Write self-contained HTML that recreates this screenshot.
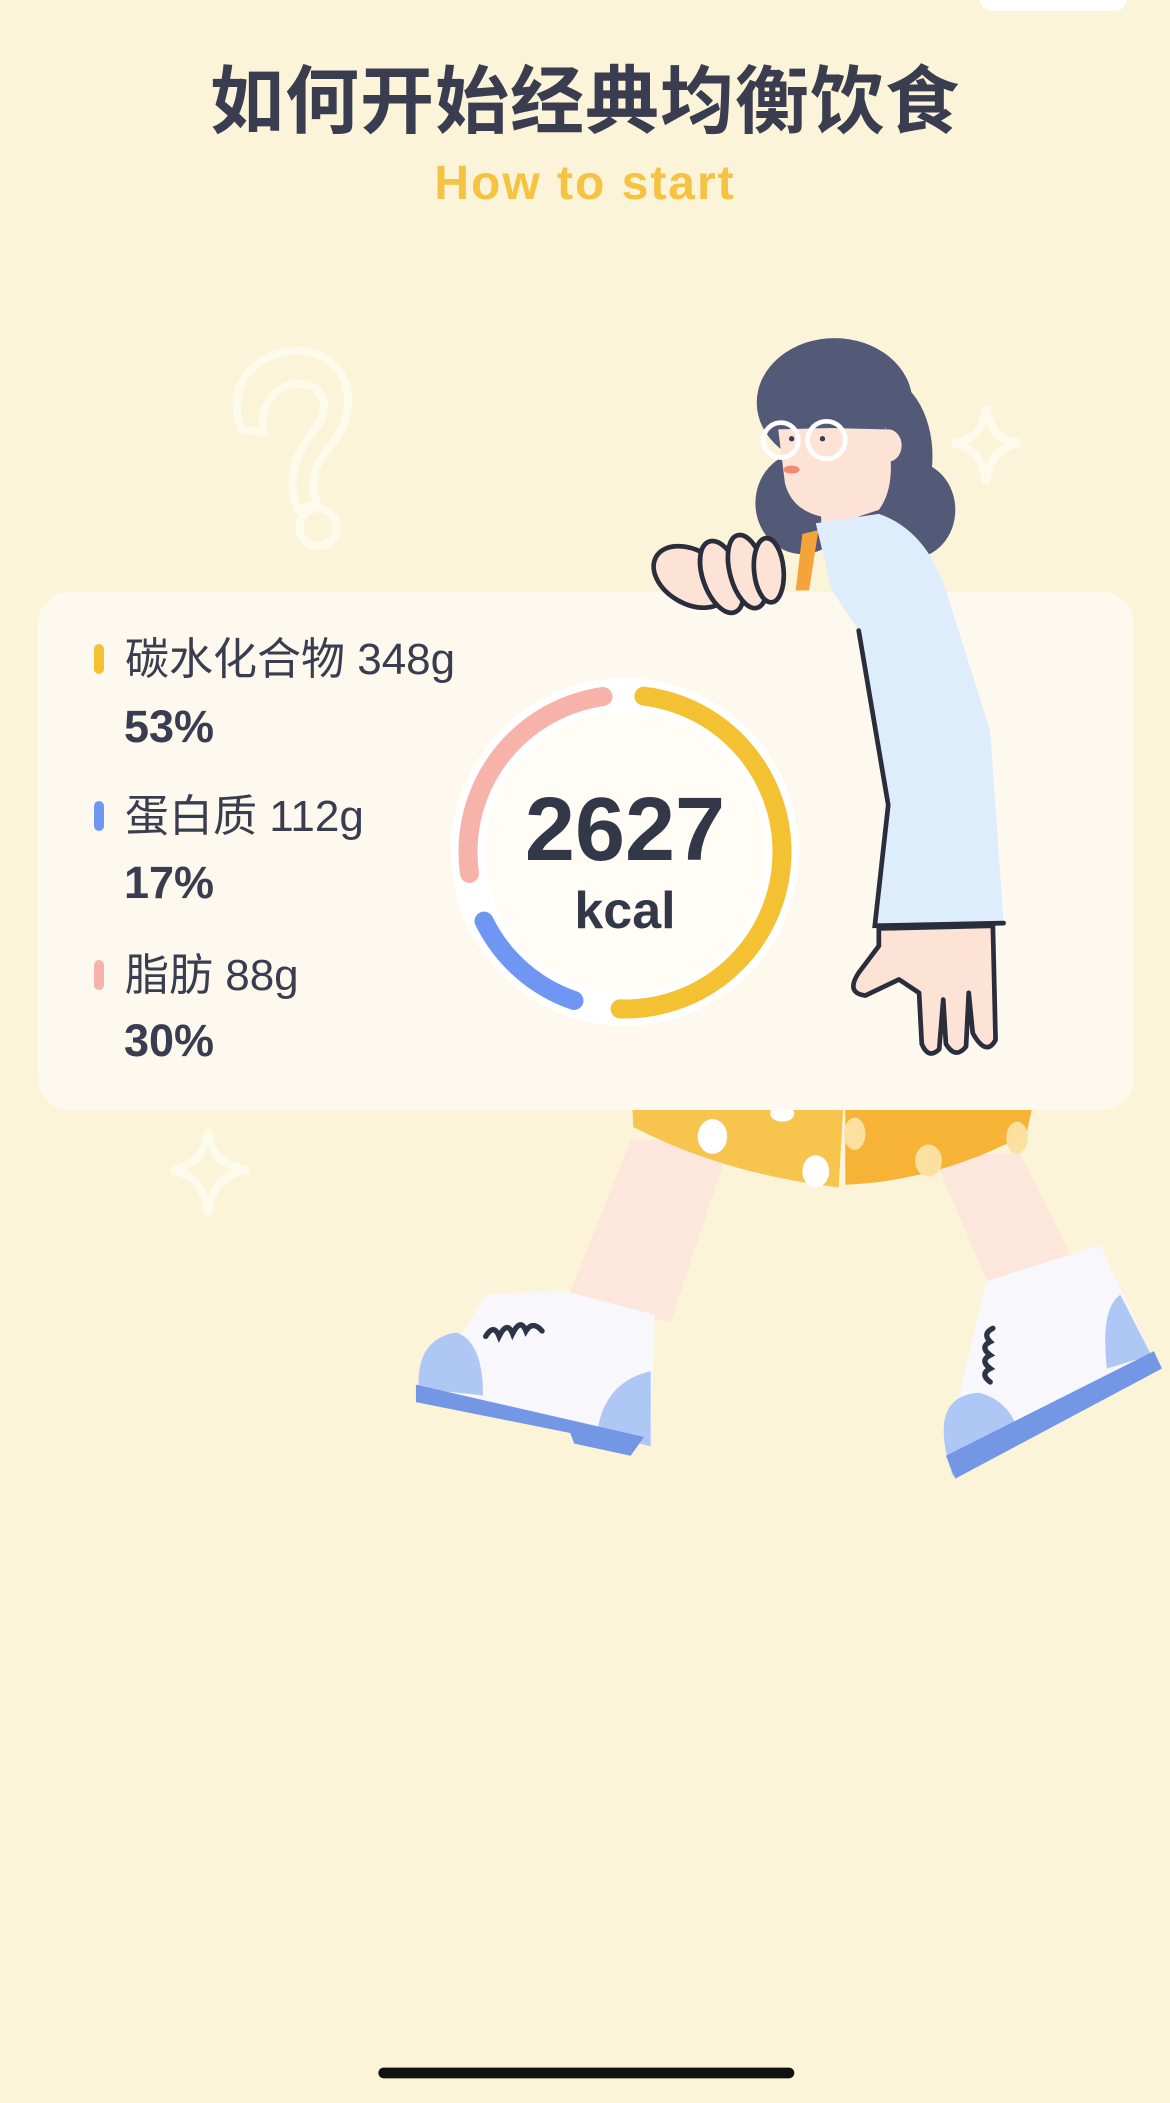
<!DOCTYPE html>
<html><head><meta charset="utf-8"><style>
html,body{margin:0;padding:0}
body{width:1170px;height:2103px;background:#fcf4d9;position:relative;overflow:hidden;font-family:"Liberation Sans","Noto Sans CJK SC",sans-serif}
.abs{position:absolute}
.title{left:0;width:1170px;top:52px;text-align:center;font-size:74px;font-weight:bold;color:#3a3d4f;letter-spacing:1px;line-height:100px}
.sub{left:0;width:1170px;top:154px;text-align:center;font-size:48px;font-weight:bold;color:#f5c242;line-height:60px;letter-spacing:2px}
.card{left:38px;top:592px;width:1096px;height:518px;background:#fdf9ee;border-radius:32px}
.bar{width:10px;height:30px;border-radius:5px}
.lab{font-size:44px;color:#3a3d4f;line-height:50px}
.pct{font-size:45px;font-weight:bold;color:#3a3d4f;line-height:50px}
</style></head><body>
<svg class="abs" style="left:0;top:0" width="1170" height="2103" viewBox="0 0 872 1567.4">
 <rect x="730" y="-10" width="110" height="18" rx="9" fill="#fff"/>
 <g fill="none" stroke="#fff" stroke-opacity="0.5" stroke-width="6">
  <path d="M180 320 C165 280 200 258 228 262 C262 268 268 305 248 330 C232 348 232 360 236 375 L222 380 C212 355 222 335 236 318 C248 300 238 285 222 286 C200 288 195 305 196 322 Z"/>
  <circle cx="237" cy="393" r="14"/>
  <path d="M735 303 C738 322 745 328 760 330 C745 333 738 340 735 360 C732 340 725 333 710 330 C725 328 732 322 735 303 Z"/>
  <path d="M155 842 C158 862 165 868 185 872 C165 876 158 884 155 905 C152 884 145 876 128 872 C145 868 152 862 155 842 Z"/>
 </g>
 <path d="M470 850 L545 850 L500 985 L420 975 Z" fill="#fde6dc"/>
 <path d="M695 860 L760 860 L805 950 L740 965 Z" fill="#fde6dc"/>
 <path d="M470 800 L630 800 L625 885 Q540 875 472 840 Z" fill="#f7c44e"/>
 <path d="M630 800 L775 800 L765 845 Q700 880 630 883 Z" fill="#f6b336"/>
 <g fill="#fff"><ellipse cx="531" cy="847" rx="11" ry="13"/><ellipse cx="608" cy="873" rx="10" ry="12"/><ellipse cx="583" cy="830" rx="9" ry="6"/></g>
 <g fill="#fbe0a0"><ellipse cx="637" cy="845" rx="8" ry="12"/><ellipse cx="692" cy="865" rx="10" ry="12"/><ellipse cx="758" cy="848" rx="8" ry="12"/></g>
 <path d="M362 965 L420 962 L488 980 L485 1078 L312 1035 Q314 1005 345 993 Z" fill="#f7f7fc"/>
 <path d="M312 1035 Q310 998 340 993 Q360 1000 360 1040 Z" fill="#aec7f4"/>
 <path d="M485 1078 L445 1068 Q450 1030 485 1022 Z" fill="#aec7f4"/>
 <path d="M310 1032 L480 1071 L470 1085 L428 1076 L425 1068 L310 1045 Z" fill="#7397e4"/>
 <path d="M362 996 q6 -10 10 0 q6 -12 10 -2 q6 -12 10 -2 q5 -8 12 0" fill="none" stroke="#2e3448" stroke-width="4" stroke-linecap="round"/>
 <path d="M735 955 L820 928 L858 1010 L712 1100 Q695 1060 715 1040 Z" fill="#f7f7fc"/>
 <path d="M710 1100 Q690 1040 730 1038 Q755 1045 760 1072 Z" fill="#aec7f4"/>
 <path d="M858 1010 L825 1020 Q820 975 835 965 Z" fill="#aec7f4"/>
 <path d="M705 1085 L860 1007 L866 1020 L712 1102 Z" fill="#7397e4"/>
 <path d="M738 1030 q-8 -6 0 -10 q-8 -6 0 -10 q-8 -6 0 -10 q-6 -6 2 -10" fill="none" stroke="#2e3448" stroke-width="4" stroke-linecap="round"/>
 <g fill="#525a78">
  <ellipse cx="622" cy="300" rx="58" ry="48"/>
  <ellipse cx="655" cy="340" rx="40" ry="60"/>
  <ellipse cx="598" cy="375" rx="35" ry="38"/>
  <ellipse cx="680" cy="380" rx="32" ry="36"/>
 </g>
 <path d="M580 320 L660 318 Q670 360 655 380 L640 385 L640 400 L612 405 L612 385 Q590 380 585 360 Z" fill="#fde3d6"/>
 <ellipse cx="662" cy="332" rx="10" ry="12" fill="#fde3d6"/>
 <path d="M570 300 Q610 280 660 310 L660 320 L575 318 Z" fill="#525a78"/>
 <g fill="none" stroke="#fff" stroke-width="3.5"><circle cx="582" cy="328" r="13"/><circle cx="616" cy="328" r="14"/></g>
 <circle cx="590" cy="327" r="2" fill="#3a3d4f"/><circle cx="613" cy="327" r="2" fill="#3a3d4f"/>
 <ellipse cx="590" cy="350" rx="6" ry="3" fill="#f08a78"/>
 <path d="M598 398 L610 395 L603 440 L593 440 Z" fill="#f5a33b"/>
</svg>
<div class="abs title">如何开始经典均衡饮食</div>
<div class="abs sub">How to start</div>
<div class="abs card"></div>
<div class="abs bar" style="left:94px;top:644px;background:#f4c133"></div>
<div class="abs lab" style="left:125px;top:635px">碳水化合物 348g</div>
<div class="abs pct" style="left:124px;top:702px">53%</div>
<div class="abs bar" style="left:94px;top:801px;background:#7096f4"></div>
<div class="abs lab" style="left:125px;top:792px">蛋白质 112g</div>
<div class="abs pct" style="left:124px;top:858px">17%</div>
<div class="abs bar" style="left:94px;top:960px;background:#f7b2aa"></div>
<div class="abs lab" style="left:125px;top:951px">脂肪 88g</div>
<div class="abs pct" style="left:124px;top:1016px">30%</div>
<svg class="abs" style="left:0;top:0" width="1170" height="2103">
 <circle cx="625" cy="852" r="157" fill="#fffdf6" stroke="#fff" stroke-width="34"/>
 <g fill="none" stroke-width="19" stroke-linecap="round" transform="rotate(-90 625 852)">
  <circle cx="625" cy="852" r="157" stroke="#f4c133" stroke-dasharray="479 1000" stroke-dashoffset="-19"/>
  <circle cx="625" cy="852" r="157" stroke="#7096f4" stroke-dasharray="123 1000" stroke-dashoffset="-545"/>
  <circle cx="625" cy="852" r="157" stroke="#f7b2aa" stroke-dasharray="246 1000" stroke-dashoffset="-718"/>
 </g>
 <text x="625" y="860" text-anchor="middle" font-family="Liberation Sans" font-weight="bold" font-size="90" fill="#333849">2627</text>
 <text x="625" y="928" text-anchor="middle" font-family="Liberation Sans" font-weight="bold" font-size="52" fill="#333849">kcal</text>
</svg>
<svg class="abs" style="left:0;top:0" width="1170" height="2103" viewBox="0 0 872 1567.4">
 <path d="M608 390 L655 383 Q690 395 705 440 L738 545 L748 688 L652 692 L662 600 L640 470 L620 440 Z" fill="#deedfb"/>
 <path d="M640 470 L662 600 L652 690 L748 688" fill="none" stroke="#2a2d3c" stroke-width="3.5" stroke-linecap="round"/>
 <path d="M655 692 L740 690 L742 775 Q735 788 725 770 L722 740 L720 780 Q712 790 705 778 L703 745 L700 782 Q692 790 687 778 L685 740 L670 730 L645 742 Q630 740 640 725 L655 705 Z" fill="#fde3d6" stroke="#2a2d3c" stroke-width="3.5" stroke-linejoin="round"/>
 <g fill="#fde3d6" stroke="#2a2d3c" stroke-width="3.5">
  <ellipse cx="515" cy="430" rx="30" ry="20" transform="rotate(30 515 430)"/>
  <ellipse cx="538" cy="430" rx="14" ry="28" transform="rotate(-20 538 430)"/>
  <ellipse cx="557" cy="426" rx="13" ry="28" transform="rotate(-15 557 426)"/>
  <ellipse cx="573" cy="425" rx="11" ry="24" transform="rotate(-5 573 425)"/>
 </g>
 <rect x="282" y="1541" width="310" height="8" rx="4" fill="#111"/>
</svg>
</body></html>
